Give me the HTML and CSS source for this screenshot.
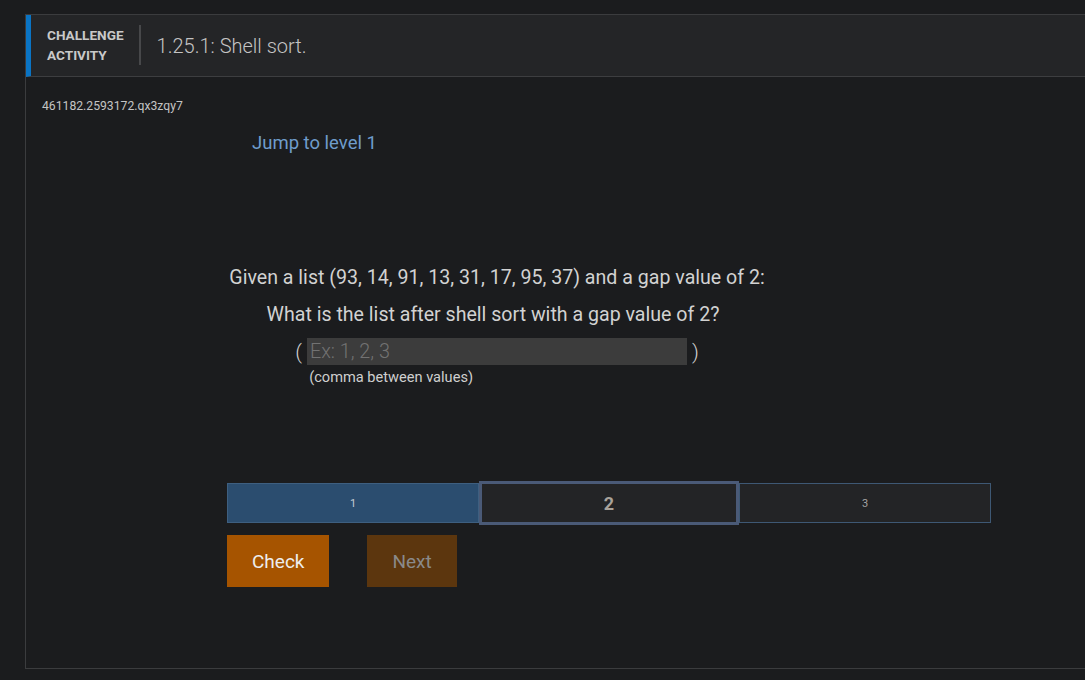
FILE: index.html
```html
<!DOCTYPE html>
<html>
<head>
<meta charset="utf-8">
<link rel="stylesheet" href="styles.css">
</head>
<body>
<div class="card">
  <div class="header">
    <div class="label">CHALLENGE<br>ACTIVITY</div>
    <div class="title">1.25.1: Shell sort.</div>
  </div>
  <div class="content">
    <div class="meta">461182.2593172.qx3zqy7</div>
    <div class="jump">Jump to level 1</div>
    <div class="question">
      <p class="q1">Given a list (93, 14, 91, 13, 31, 17, 95, 37) and a gap value of 2:</p>
      <p class="q2">What is the list after shell sort with a gap value of 2?</p>
      <div class="answer">
        <div class="answer-row">
          <span class="paren">(</span>
          <input class="field" type="text" placeholder="Ex: 1, 2, 3">
          <span class="paren">)</span>
        </div>
        <div class="hint">(comma between values)</div>
      </div>
    </div>
    <div class="levels">
      <div class="level done">1</div>
      <div class="level current">2</div>
      <div class="level todo">3</div>
    </div>
    <div class="actions">
      <button class="btn check">Check</button>
      <button class="btn next">Next</button>
    </div>
  </div>
</div>
</body>
</html>
```
FILE: styles.css
```css
html, body {
  margin: 0;
  padding: 0;
  background: #1b1c1e;
  overflow: hidden;
}
body {
  padding: 14px 0 0 25px;
  font-family: Roboto, "Liberation Sans", sans-serif;
  color: #cfcfcf;
}
.card {
  height: 653px;
  border: 1px solid #3b3c3e;
  border-right: none;
  box-sizing: content-box;
}
.header {
  display: flex;
  align-items: center;
  height: 61px;
  background: #242527;
  border-left: 5px solid #0a74c4;
  border-bottom: 1px solid #3d3e40;
}
.label {
  font-size: 13.6px;
  font-weight: 700;
  line-height: 20px;
  color: #c9c9c9;
  padding: 0 15px 0 16px;
  border-right: 2px solid #47484a;
  margin-top: -2px;
}
.title {
  font-size: 20px;
  font-weight: 300;
  color: #c4c4c4;
  padding-left: 16px;
}
.content {
  display: flex;
  flex-direction: column;
  align-items: flex-start;
}
.meta {
  font-size: 12.2px;
  line-height: 16px;
  color: #c4c4c4;
  padding: 21px 16px 0;
}
.jump {
  margin: 17px 0 0 226px;
  font-size: 18.5px;
  line-height: 24px;
  color: #6f9ccc;
}
.question {
  margin: 111px 0 0 201px;
  width: 540px;
  text-align: center;
}
.question p {
  margin: 0;
  font-size: 19.6px;
  line-height: 24px;
  color: #d2d2d2;
}
.q2 {
  margin-top: 13px !important;
  padding-right: 8px;
}
.answer {
  display: inline-block;
  margin-top: 11px;
  text-align: left;
}
.answer-row {
  display: flex;
  align-items: center;
  height: 27px;
}
.paren {
  font-size: 21px;
  font-weight: 300;
  color: #cfcfcf;
}
.field {
  width: 380px;
  height: 27px;
  box-sizing: border-box;
  margin: 0 5px;
  padding: 0 3px;
  border: none;
  background: #3c3c3c;
  font-family: Roboto, "Liberation Sans", sans-serif;
  font-size: 19.8px;
  font-weight: 300;
  color: #ddd;
  outline: none;
}
.field::placeholder {
  color: #727272;
}
.hint {
  margin: 3px 0 0 14px;
  font-size: 14.6px;
  line-height: 18px;
  color: #cfcfcf;
}
.levels {
  display: flex;
  align-items: center;
  margin: 95px 0 0 201px;
  width: 764px;
  height: 44px;
}
.level {
  flex: 1;
  display: flex;
  align-items: center;
  justify-content: center;
  box-sizing: border-box;
  height: 40px;
  font-size: 11px;
}
.done {
  background: #2b4d6f;
  border: 1px solid #3e5f80;
  color: #c5ccd4;
}
.current {
  flex: 0 0 260px;
  height: 44px;
  background: #232426;
  border: 3px solid #4a5a77;
  font-size: 18px;
  font-weight: 700;
  color: #a8a29a;
}
.todo {
  background: #232426;
  border: 1px solid #3e5874;
  color: #a3a3a3;
}
.actions {
  display: flex;
  gap: 38px;
  margin: 10px 0 0 201px;
}
.btn {
  height: 52px;
  padding: 0 25px;
  border: none;
  font-family: Roboto, "Liberation Sans", sans-serif;
  font-size: 19px;
  cursor: pointer;
}
.check {
  background: #a65400;
  color: #eeeeee;
}
.next {
  background: #5c360e;
  color: #8a8a8a;
}
```
